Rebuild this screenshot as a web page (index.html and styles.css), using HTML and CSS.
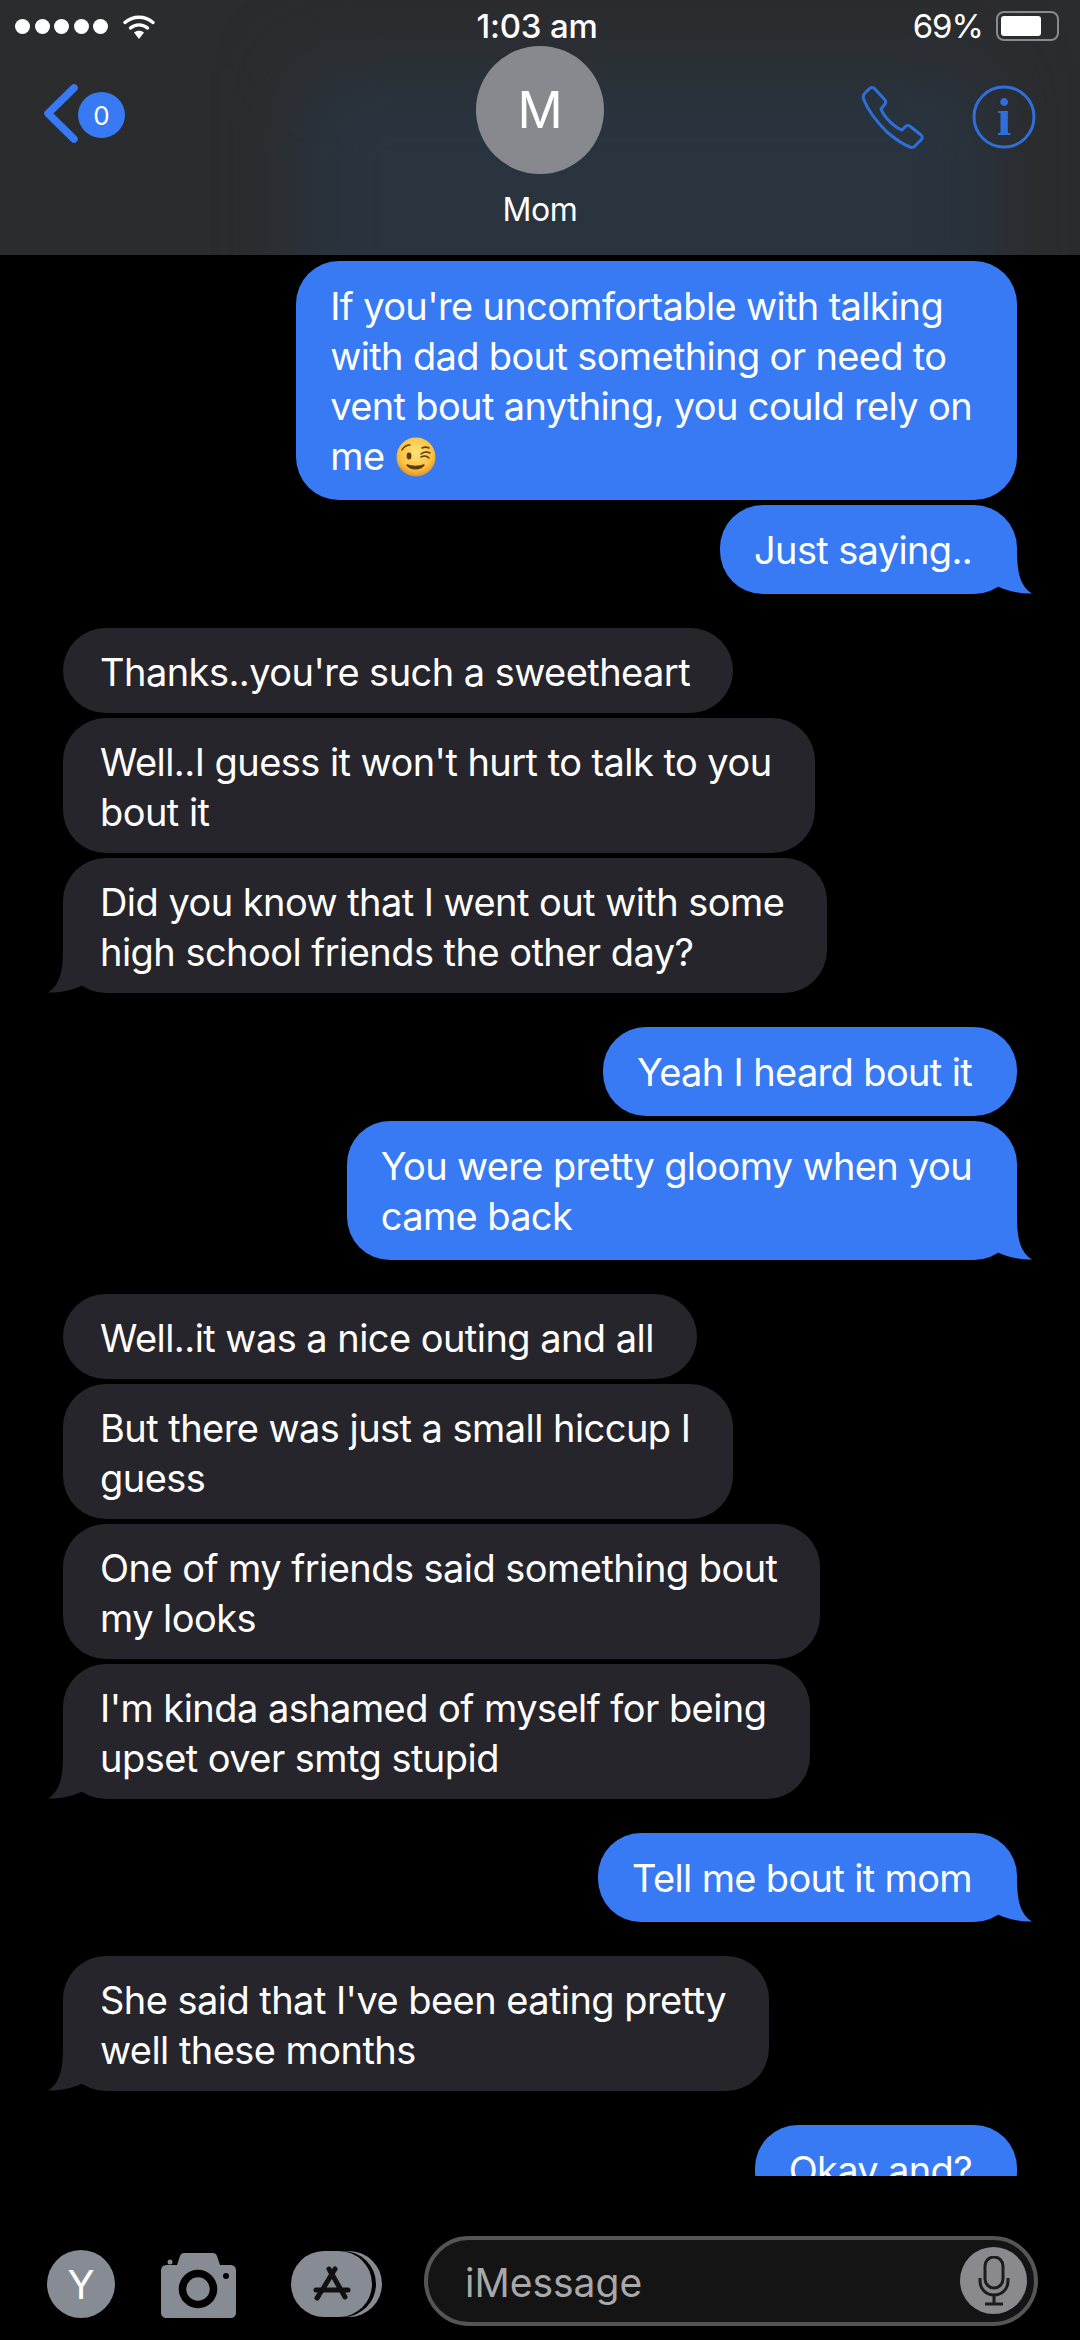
FILE: index.html
```html
<!DOCTYPE html>
<html>

<head>
    <meta http-equiv="Content-Type" content="text/html; charset=utf-8">
    <title>Mom</title>
    <link rel="stylesheet" href="styles.css">
</head>

<body>
    <div class="phone">
        <!-- top bar -->
        <div class="header">
            <div class="status">
                <div class="status-left">
                    <span class="dots"><i></i><i></i><i></i><i></i><i></i></span>
                    <svg class="wifi" viewBox="0 0 32 25">
                        <path d="M2 8.500C10 1.500 22 1.500 30 8.500" fill="none" stroke="#fff" stroke-width="3.400" stroke-linecap="round" />
                        <path d="M7.500 14C12.500 9.800 19.500 9.800 24.500 14" fill="none" stroke="#fff" stroke-width="3.400" stroke-linecap="round" />
                        <path d="M11 18.500C14 16 18 16 21 18.500L16 25Z" fill="#fff" />
                    </svg>
                </div>
                <div class="clock">1:03 am</div>
                <div class="status-right">
                    <span class="percent">69%</span>
                    <span class="battery"><span class="battery-fill"></span></span>
                </div>
            </div>
            <div class="nav">
                <div class="back">
                    <svg class="chevron" viewBox="0 0 35 59">
                        <path d="M31 4L5 29.500L31 55" fill="none" stroke="#377af3" stroke-width="7.500" stroke-linecap="round" stroke-linejoin="round" />
                    </svg>
                    <span class="badge">0</span>
                </div>
                <div class="contact">
                    <div class="avatar">M</div>
                    <div class="contact-name">Mom</div>
                </div>
                <div class="actions">
                    <svg class="call" viewBox="0 0 66 66">
                        <path d="M14 3C12 2 11 2 9 4L5 8C3 10 3 13 4 15C9 28 18 38 27 47C34 53 42 59 50 62C52 63 54 62 55 61L61 55C63 53 63 52 61 50L51 42C49 40 48 40 46 41L42 45C34 42 24 32 21 24L25 19C26 17 26 16 25 15Z" fill="none" stroke="#2f6fdc" stroke-width="3" stroke-linejoin="round" />
                    </svg>
                    <svg class="info" viewBox="0 0 64 64">
                        <circle cx="32" cy="32" r="30" fill="none" stroke="#2f6fdc" stroke-width="3" />
                        <text class="info-i" x="32" y="50" text-anchor="middle">i</text>
                    </svg>
                </div>
            </div>
        </div>

        <!-- messages -->
        <div class="thread">
            <div class="group out">
                <div class="bubble">If you're uncomfortable with talking<br>with dad bout something or need to<br>vent bout anything, you could rely on<br>me <svg class="emoji" viewBox="0 0 40 40">
                        <defs>
                            <radialGradient id="face" cx="50%" cy="38%" r="62%">
                                <stop offset="0" stop-color="#ffe27a" />
                                <stop offset="0.7" stop-color="#fbc23e" />
                                <stop offset="1" stop-color="#e0912a" />
                            </radialGradient>
                        </defs>
                        <circle cx="20" cy="20" r="19.500" fill="url(#face)" />
                        <ellipse cx="13" cy="19" rx="2.400" ry="3.400" fill="#5b3a12" />
                        <path d="M6 13C8 9.500 11 8 14 8M25 17C28 14.500 31 14.500 34 16M25 20C28 18.500 31 19 33 21M26 11C28 10 31 10 33 11" fill="none" stroke="#5b3a12" stroke-width="1.500" stroke-linecap="round" />
                        <path d="M11 28C15 33 24 33 28 28C24 30 15 30 11 28Z" fill="#5b3a12" stroke="#5b3a12" stroke-width="1.400" stroke-linejoin="round" />
                    </svg></div>
                <div class="bubble tail">Just saying..</div>
            </div>
            <div class="group in">
                <div class="bubble">Thanks..you're such a sweetheart</div>
                <div class="bubble">Well..I guess it won't hurt to talk to you<br>bout it</div>
                <div class="bubble tail">Did you know that I went out with some<br>high school friends the other day?</div>
            </div>
            <div class="group out">
                <div class="bubble">Yeah I heard bout it</div>
                <div class="bubble tail">You were pretty gloomy when you<br>came back</div>
            </div>
            <div class="group in">
                <div class="bubble">Well..it was a nice outing and all</div>
                <div class="bubble">But there was just a small hiccup I<br>guess</div>
                <div class="bubble">One of my friends said something bout<br>my looks</div>
                <div class="bubble tail">I'm kinda ashamed of myself for being<br>upset over smtg stupid</div>
            </div>
            <div class="group out">
                <div class="bubble tail">Tell me bout it mom</div>
            </div>
            <div class="group in">
                <div class="bubble tail">She said that I've been eating pretty<br>well these months</div>
            </div>
            <div class="group out">
                <div class="bubble">Okay and?</div>
            </div>
        </div>

        <!-- composer -->
        <div class="composer">
            <div class="me">Y</div>
            <svg class="camera" viewBox="0 0 75 65">
                <path d="M6 12H16L19 3C20 1 21 0 23 0H52C54 0 55 1 56 3L59 12H69C73 12 75 14 75 18V59C75 63 73 65 69 65H6C2 65 0 63 0 59V18C0 14 2 12 6 12Z" fill="#868b94" />
                <circle cx="9" cy="9" r="2.500" fill="#868b94" />
                <circle cx="37" cy="36" r="15.500" fill="none" stroke="#000" stroke-width="7.500" />
                <circle cx="65" cy="23" r="3" fill="#000" />
            </svg>
            <div class="apps">
                <span class="apps-back"></span>
                <span class="apps-gap"></span>
                <span class="apps-front">
                    <svg class="apps-icon" viewBox="0 0 42 36">
                        <path d="M18 3L34 31M5 24H37M24 3L10 26" fill="none" stroke="#111" stroke-width="5" stroke-linecap="round" />
                        <path d="M6 32L8 29" fill="none" stroke="#111" stroke-width="5" stroke-linecap="round" />
                    </svg>
                </span>
            </div>
            <div class="input">
                <span class="placeholder">iMessage</span>
                <span class="mic">
                    <svg class="mic-icon" viewBox="0 0 32 50">
                        <rect x="7" y="1" width="18" height="31" rx="9" fill="none" stroke="#1c1c1e" stroke-width="3" />
                        <path d="M2 22V25C2 33 8 39 16 39C24 39 30 33 30 25V22M16 39V47M7 48H25" fill="none" stroke="#1c1c1e" stroke-width="3" />
                    </svg>
                </span>
            </div>
        </div>
    </div>
</body>

</html>
```

FILE: styles.css
```css
* {
    box-sizing: border-box;
}

html,
body {
    margin: 0;
    padding: 0;
    background: #000;
}

.phone {
    width: 1080px;
    height: 2340px;
    display: flex;
    flex-direction: column;
    overflow: hidden;
    color: #fff;
    font-family: "Inter", "Liberation Sans", sans-serif;
}

/* top bar */
.header {
    position: relative;
    height: 255px;
    flex: none;
    overflow: hidden;
    background: #2b2c2e;
}

/* blurred tint behind the contact */
.header::before {
    content: "";
    position: absolute;
    left: 300px;
    right: 90px;
    top: 70px;
    bottom: -80px;
    background: #29343f;
    filter: blur(38px);
}

.status {
    position: relative;
    height: 46px;
    padding: 6px 21px 0 15px;
    display: grid;
    grid-template-columns: 1fr auto 1fr;
    align-items: center;
}

.status-left {
    display: flex;
    align-items: center;
    gap: 15px;
}

.dots {
    display: flex;
    gap: 4.500px;
}

.dots i {
    width: 15px;
    height: 15px;
    border-radius: 50%;
    background: #fff;
}

.wifi {
    width: 32px;
    height: 25px;
}

.clock {
    font-size: 33px;
    font-weight: 500;
    letter-spacing: -0.200px;
}

.status-right {
    display: flex;
    justify-content: flex-end;
    align-items: center;
    gap: 13px;
}

.percent {
    font-size: 33px;
    letter-spacing: -1px;
}

.battery {
    width: 63px;
    height: 30px;
    padding: 3px;
    border: 2px solid #8a8a8a;
    border-radius: 8px;
}

.battery-fill {
    display: block;
    width: 40px;
    height: 100%;
    background: #fff;
    border-radius: 3px;
}

.nav {
    position: relative;
    display: grid;
    grid-template-columns: 1fr auto 1fr;
    padding: 0 44px;
}

.back {
    display: flex;
    align-items: center;
    height: 59px;
    margin: 38px 0 0 -1px;
}

.chevron {
    width: 35px;
    height: 59px;
}

.badge {
    width: 47px;
    height: 46px;
    margin-top: 3px;
    border-radius: 50%;
    background: #377af3;
    display: flex;
    align-items: center;
    justify-content: center;
    font-size: 26px;
}

.contact {
    display: flex;
    flex-direction: column;
    align-items: center;
}

.avatar {
    width: 128px;
    height: 128px;
    border-radius: 50%;
    background: #87898f;
    display: flex;
    align-items: center;
    justify-content: center;
    font-size: 50px;
}

.contact-name {
    margin-top: 16px;
    font-size: 32px;
    line-height: 40px;
    letter-spacing: -0.300px;
}

.actions {
    display: flex;
    justify-content: flex-end;
    gap: 46px;
    margin-top: 39px;
}

.call {
    width: 66px;
    height: 66px;
}

.info {
    width: 64px;
    height: 64px;
}

.info-i {
    font-family: "Liberation Serif", serif;
    font-size: 52px;
    font-weight: 700;
    fill: #2f6fdc;
}

/* messages */
.thread {
    flex: none;
    height: 1921px;
    overflow: hidden;
    padding: 6px 63px 0;
    display: flex;
    flex-direction: column;
    gap: 34px;
}

.group {
    display: flex;
    flex-direction: column;
    gap: 5px;
    flex: none;
}

.group.out {
    align-items: flex-end;
}

.group.in {
    align-items: flex-start;
}

.bubble {
    position: relative;
    flex: none;
    font-size: 38px;
    line-height: 50px;
    letter-spacing: -0.550px;
    white-space: nowrap;
    border-radius: 43px;
}

.out .bubble {
    background: #377af3;
    padding: 20px 45px 19px 34px;
    letter-spacing: -0.650px;
}

.in .bubble {
    background: #26252b;
    padding: 19px 43px 16px 37px;
}

.bubble.tail::after {
    content: "";
    position: absolute;
    bottom: 0;
    width: 40px;
    height: 50px;
    background: inherit;
}

.out .bubble.tail::after {
    right: -15px;
    clip-path: path("M25 6C25 28 28 42 40 49.500C28 50 15 47 5 42V6Z");
}

.in .bubble.tail::after {
    left: -15px;
    clip-path: path("M15 6C15 28 12 42 0 49.500C12 50 25 47 35 42V6Z");
}

.emoji {
    width: 40px;
    height: 40px;
    vertical-align: -7px;
    margin-left: 2px;
}

/* composer */
.composer {
    flex: 1;
    display: flex;
    align-items: flex-start;
    padding: 60px 0 0 47px;
}

.me {
    width: 68px;
    height: 68px;
    margin-top: 14px;
    border-radius: 50%;
    background: #868b94;
    display: flex;
    align-items: center;
    justify-content: center;
    font-size: 40px;
}

.camera {
    width: 75px;
    height: 65px;
    margin: 17px 0 0 46px;
}

.apps {
    position: relative;
    width: 91px;
    height: 66px;
    margin: 15px 0 0 55px;
}

.apps-back,
.apps-gap,
.apps-front {
    position: absolute;
    top: 0;
    height: 66px;
    border-radius: 33px;
}

.apps-back {
    left: 25px;
    width: 66px;
    background: #868b94;
}

.apps-gap {
    left: 19px;
    width: 66px;
    background: #000;
}

.apps-front {
    left: 0;
    width: 81px;
    background: #868b94;
    display: flex;
    align-items: center;
    justify-content: center;
}

.apps-icon {
    width: 42px;
    height: 36px;
}

.input {
    width: 614px;
    height: 90px;
    margin-left: 42px;
    border: 4px solid #555;
    border-radius: 45px;
    background: #141414;
    display: flex;
    align-items: center;
    justify-content: space-between;
    padding: 0 7px 0 37px;
}

.placeholder {
    padding-top: 3px;
    font-size: 39px;
    color: #a9a9a9;
}

.mic {
    width: 67px;
    height: 67px;
    margin-top: -1px;
    border-radius: 50%;
    background: #8a8a8e;
    display: flex;
    align-items: center;
    justify-content: center;
}

.mic-icon {
    width: 32px;
    height: 50px;
}
```
